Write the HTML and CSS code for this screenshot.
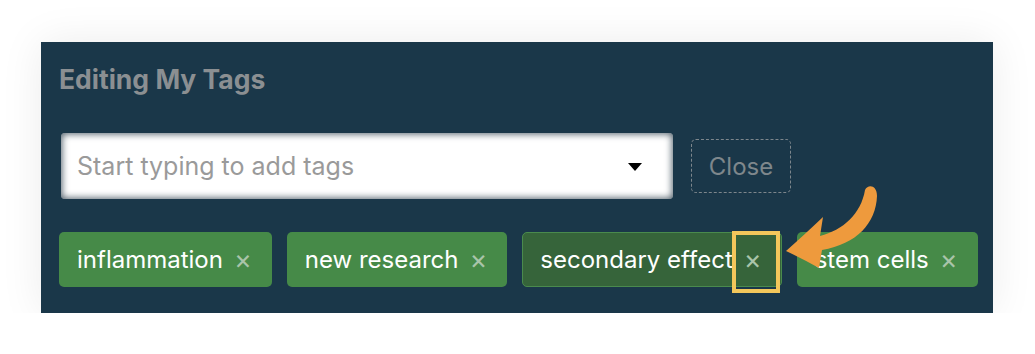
FILE: index.html
```html
<!DOCTYPE html>
<html>
<head>
<meta charset="utf-8">
<link rel="stylesheet" href="styles.css">
</head>
<body>
<div class="panel">
  <h2 class="title">Editing My Tags</h2>
  <div class="row">
    <div class="select">
      <span class="ph">Start typing to add tags</span>
      <span class="caret"></span>
    </div>
    <button class="close">Close</button>
  </div>
  <div class="tags">
    <span class="tag">inflammation<span class="x">×</span></span>
    <span class="tag">new research<span class="x">×</span></span>
    <span class="tag active">secondary effect<span class="x">×</span><span class="highlight"></span></span>
    <span class="tag">stem cells<span class="x">×</span></span>
  </div>
  <svg class="arrow" viewBox="41 42 952 271" xmlns="http://www.w3.org/2000/svg">
    <path d="M865 190 C868 184 877 185 877 196 C876 223 857 244 822 250 L819 268 Q803 259 786 251 Q803 236 823 217 L820 236 C843 230 861 214 865 190 Z" fill="#ee9a3d"/>
  </svg>
</div>
</body>
</html>
```
FILE: styles.css
```css
html, body {
  margin: 0;
  padding: 0;
  background: #ffffff;
}
body {
  padding: 42px 0 0 41px;
  font-family: Inter, "Noto Sans", "Liberation Sans", sans-serif;
}
.panel {
  position: relative;
  width: 952px;
  height: 271px;
  box-sizing: border-box;
  background: #1a3749;
  box-shadow: 0 0 40px rgba(0, 0, 0, 0.08);
  padding: 21px 18px 0 18px;
}
.title {
  margin: 0;
  font-size: 26.5px;
  font-weight: 700;
  color: #8b8f92;
  line-height: 32px;
}
.row {
  display: flex;
  align-items: center;
  gap: 18px;
  margin-top: 38px;
  padding-left: 2px;
}
.select {
  width: 612px;
  height: 66px;
  flex-shrink: 0;
  box-sizing: border-box;
  background: #ffffff;
  border-radius: 4px;
  box-shadow: inset 0 0 7px 1px rgba(20, 40, 55, 0.75);
  display: flex;
  align-items: center;
  justify-content: space-between;
  padding: 0 31px 0 16px;
}
.ph {
  font-size: 25px;
  color: #9a9a9a;
  white-space: nowrap;
}
.caret {
  width: 0;
  height: 0;
  border-left: 7px solid transparent;
  border-right: 7px solid transparent;
  border-top: 8px solid #000;
  margin-top: 2px;
}
.close {
  width: 100px;
  height: 54px;
  flex-shrink: 0;
  box-sizing: border-box;
  background: transparent;
  border: 1.5px dashed #7d868c;
  border-radius: 5px;
  font-family: inherit;
  font-size: 24px;
  color: #7e878c;
  padding: 0;
}
.tags {
  display: flex;
  gap: 15px;
  margin-top: 33px;
}
.tag {
  position: relative;
  display: flex;
  align-items: center;
  flex-shrink: 0;
  white-space: nowrap;
  height: 55px;
  box-sizing: border-box;
  padding: 0 20px 0 18px;
  background: #468a48;
  border-radius: 5px;
  color: #ffffff;
  font-size: 24px;
}
.tag.active {
  background: #36643a;
  border: 1px solid #4a8a4d;
  padding: 0 19px 0 17px;
}
.x {
  margin-left: 11px;
  font-size: 27px;
  line-height: 1;
  color: #a9c4aa;
}
.highlight {
  position: absolute;
  left: 209px;
  top: -2px;
  width: 48px;
  height: 62px;
  box-sizing: border-box;
  border: 4px solid #f3c75b;
}
.arrow {
  position: absolute;
  left: 0;
  top: 0;
  width: 100%;
  height: 100%;
  pointer-events: none;
}
```
